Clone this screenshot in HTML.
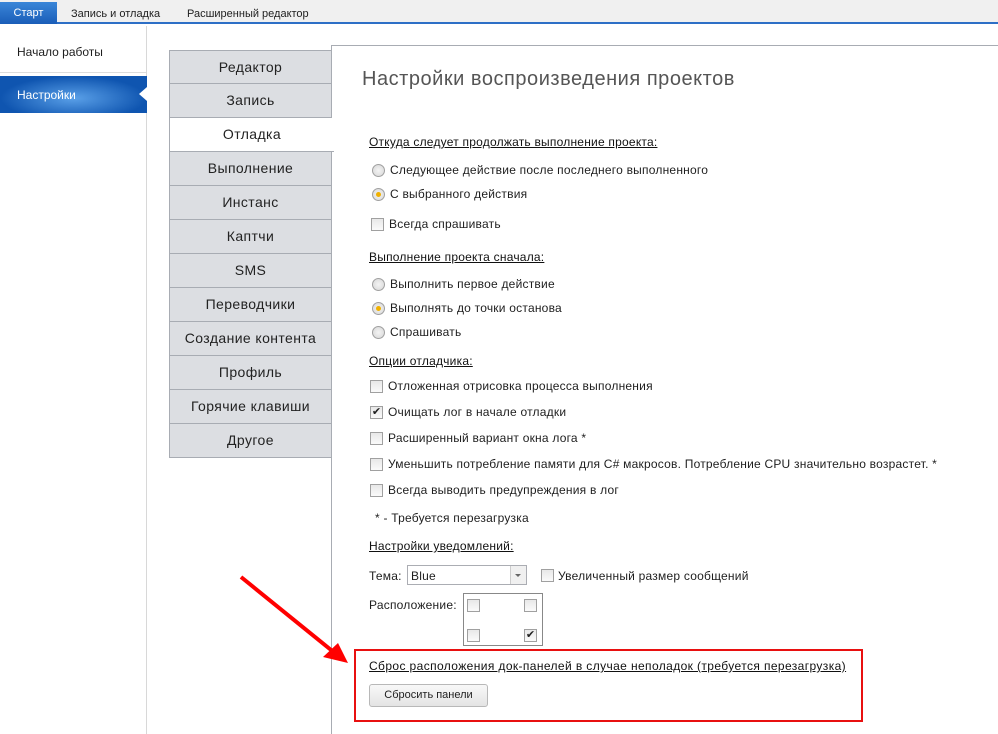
<!DOCTYPE html>
<html><head><meta charset="utf-8"><style>
*{margin:0;padding:0;box-sizing:border-box}
body{width:998px;height:734px;overflow:hidden;background:#fff;font-family:"Liberation Sans","DejaVu Sans",sans-serif;font-size:12px;color:#1e1e1e;position:relative;letter-spacing:0.22px}
.a{position:absolute;white-space:nowrap}
.tabbar{left:0;top:0;width:998px;height:24px;background:#f0f0f0;border-bottom:2px solid #2d6fc6}
.vt{position:absolute;left:169px;width:163px;height:34px;background:#dcdee2;border:1px solid #a8acb3;border-top:none;font-size:14px;text-align:center;line-height:33px;color:#222;letter-spacing:0.4px}
.rb{position:absolute;width:13px;height:13px;border-radius:50%;border:1px solid #a0a0a0;background:radial-gradient(#f4f4f4,#d6d6d6)}
.rb.on::after{content:"";position:absolute;left:3px;top:3px;width:5px;height:5px;border-radius:50%;background:#f0b000}
.cb{position:absolute;width:13px;height:13px;border:1px solid #a0a0a0;background:linear-gradient(#e8e8e8,#fafafa);font-size:11px;line-height:11px;text-align:center;color:#222;letter-spacing:0}
.h{text-decoration:underline;color:#111}
.t{letter-spacing:0;font-size:11px}
</style></head><body>
<div class="a tabbar"></div>
<div class="a t" style="left:0;top:2px;width:57px;height:22px;background:linear-gradient(#3a86d8,#1a5db8);color:#fff;text-align:center;line-height:22px">Старт</div>
<div class="a t" style="left:71px;top:8px">Запись и отладка</div>
<div class="a t" style="left:187px;top:8px">Расширенный редактор</div>

<div class="a" style="left:0;top:26px;width:147px;height:708px;background:#fff;border-right:1px solid #d8d8d8"></div>
<div class="a" style="left:17px;top:45px;font-size:12px;letter-spacing:0">Начало работы</div>
<div class="a" style="left:0;top:72px;width:146px;height:1px;background:#ddd"></div>
<div class="a" style="left:0;top:76px;width:147px;height:37px;background:radial-gradient(ellipse at 50% 60%,#5aa0e8,#0f55b0 70%)"></div>
<div class="a" style="left:17px;top:88px;color:#fff;font-size:12px;letter-spacing:0">Настройки</div>
<div class="a" style="left:139px;top:87px;width:0;height:0;border-top:7px solid transparent;border-bottom:7px solid transparent;border-right:8px solid #fff"></div>

<div class="a" style="left:331px;top:45px;width:1px;height:689px;background:#a8acb3"></div>
<div class="a" style="left:331px;top:45px;width:667px;height:1px;background:#a8acb3"></div>
<div class="vt" style="top:50px;border-top:1px solid #a8acb3">Редактор</div>
<div class="vt" style="top:84px">Запись</div>
<div class="vt" style="top:118px;background:#fff;width:165px;border-right:none">Отладка</div>
<div class="vt" style="top:152px">Выполнение</div>
<div class="vt" style="top:186px">Инстанс</div>
<div class="vt" style="top:220px">Каптчи</div>
<div class="vt" style="top:254px">SMS</div>
<div class="vt" style="top:288px">Переводчики</div>
<div class="vt" style="top:322px">Создание контента</div>
<div class="vt" style="top:356px">Профиль</div>
<div class="vt" style="top:390px">Горячие клавиши</div>
<div class="vt" style="top:424px">Другое</div>

<div class="a" style="left:362px;top:68px;font-size:20px;color:#555;letter-spacing:0.53px">Настройки воспроизведения проектов</div>

<div class="a h" style="left:369px;top:135px">Откуда следует продолжать выполнение проекта:</div>
<div class="rb" style="left:372px;top:164px"></div><div class="a" style="left:390px;top:163px">Следующее действие после последнего выполненного</div>
<div class="rb on" style="left:372px;top:188px"></div><div class="a" style="left:390px;top:187px">С выбранного действия</div>
<div class="cb" style="left:371px;top:218px"></div><div class="a" style="left:389px;top:217px">Всегда спрашивать</div>

<div class="a h" style="left:369px;top:250px">Выполнение проекта сначала:</div>
<div class="rb" style="left:372px;top:278px"></div><div class="a" style="left:390px;top:277px">Выполнить первое действие</div>
<div class="rb on" style="left:372px;top:302px"></div><div class="a" style="left:390px;top:301px">Выполнять до точки останова</div>
<div class="rb" style="left:372px;top:326px"></div><div class="a" style="left:390px;top:325px">Спрашивать</div>

<div class="a h" style="left:369px;top:354px">Опции отладчика:</div>
<div class="cb" style="left:370px;top:380px"></div><div class="a" style="left:388px;top:379px">Отложенная отрисовка процесса выполнения</div>
<div class="cb" style="left:370px;top:406px">✔</div><div class="a" style="left:388px;top:405px">Очищать лог в начале отладки</div>
<div class="cb" style="left:370px;top:432px"></div><div class="a" style="left:388px;top:431px">Расширенный вариант окна лога *</div>
<div class="cb" style="left:370px;top:458px"></div><div class="a" style="left:388px;top:457px">Уменьшить потребление памяти для C# макросов. Потребление CPU значительно возрастет. *</div>
<div class="cb" style="left:370px;top:484px"></div><div class="a" style="left:388px;top:483px">Всегда выводить предупреждения в лог</div>
<div class="a" style="left:375px;top:511px">* - Требуется перезагрузка</div>

<div class="a h" style="left:369px;top:539px">Настройки уведомлений:</div>
<div class="a" style="left:369px;top:569px">Тема:</div>
<div class="a" style="left:407px;top:565px;width:120px;height:20px;border:1px solid #abadb3;background:#fff"></div>
<div class="a" style="left:411px;top:569px">Blue</div>
<div class="a" style="left:510px;top:566px;width:16px;height:18px;border-left:1px solid #ccc;background:#f0f0f0"></div>
<div class="a" style="left:515px;top:574px;border-left:3px solid transparent;border-right:3px solid transparent;border-top:3px solid #666"></div>
<div class="cb" style="left:541px;top:569px"></div><div class="a" style="left:558px;top:569px">Увеличенный размер сообщений</div>
<div class="a" style="left:369px;top:598px">Расположение:</div>
<div class="a" style="left:463px;top:593px;width:80px;height:53px;border:1px solid #888;background:#fff"></div>
<div class="cb" style="left:467px;top:599px"></div>
<div class="cb" style="left:524px;top:599px"></div>
<div class="cb" style="left:467px;top:629px"></div>
<div class="cb" style="left:524px;top:629px">✔</div>

<div class="a" style="left:354px;top:649px;width:509px;height:73px;border:2px solid #e81010"></div>
<div class="a h" style="left:369px;top:659px;letter-spacing:0.39px">Сброс расположения док-панелей в случае неполадок (требуется перезагрузка)</div>
<div class="a" style="left:369px;top:684px;width:119px;height:23px;border:1px solid #b8b8b8;border-radius:3px;background:linear-gradient(#f8f8f8,#e4e4e4);text-align:center;line-height:21px;font-size:11px;letter-spacing:0">Сбросить панели</div>

<svg class="a" style="left:0;top:0" width="998" height="734"><line x1="241" y1="577" x2="336" y2="654" stroke="#f00" stroke-width="4"/><polygon points="348,663 323,657 338,643" fill="#f00"/></svg>
</body></html>
